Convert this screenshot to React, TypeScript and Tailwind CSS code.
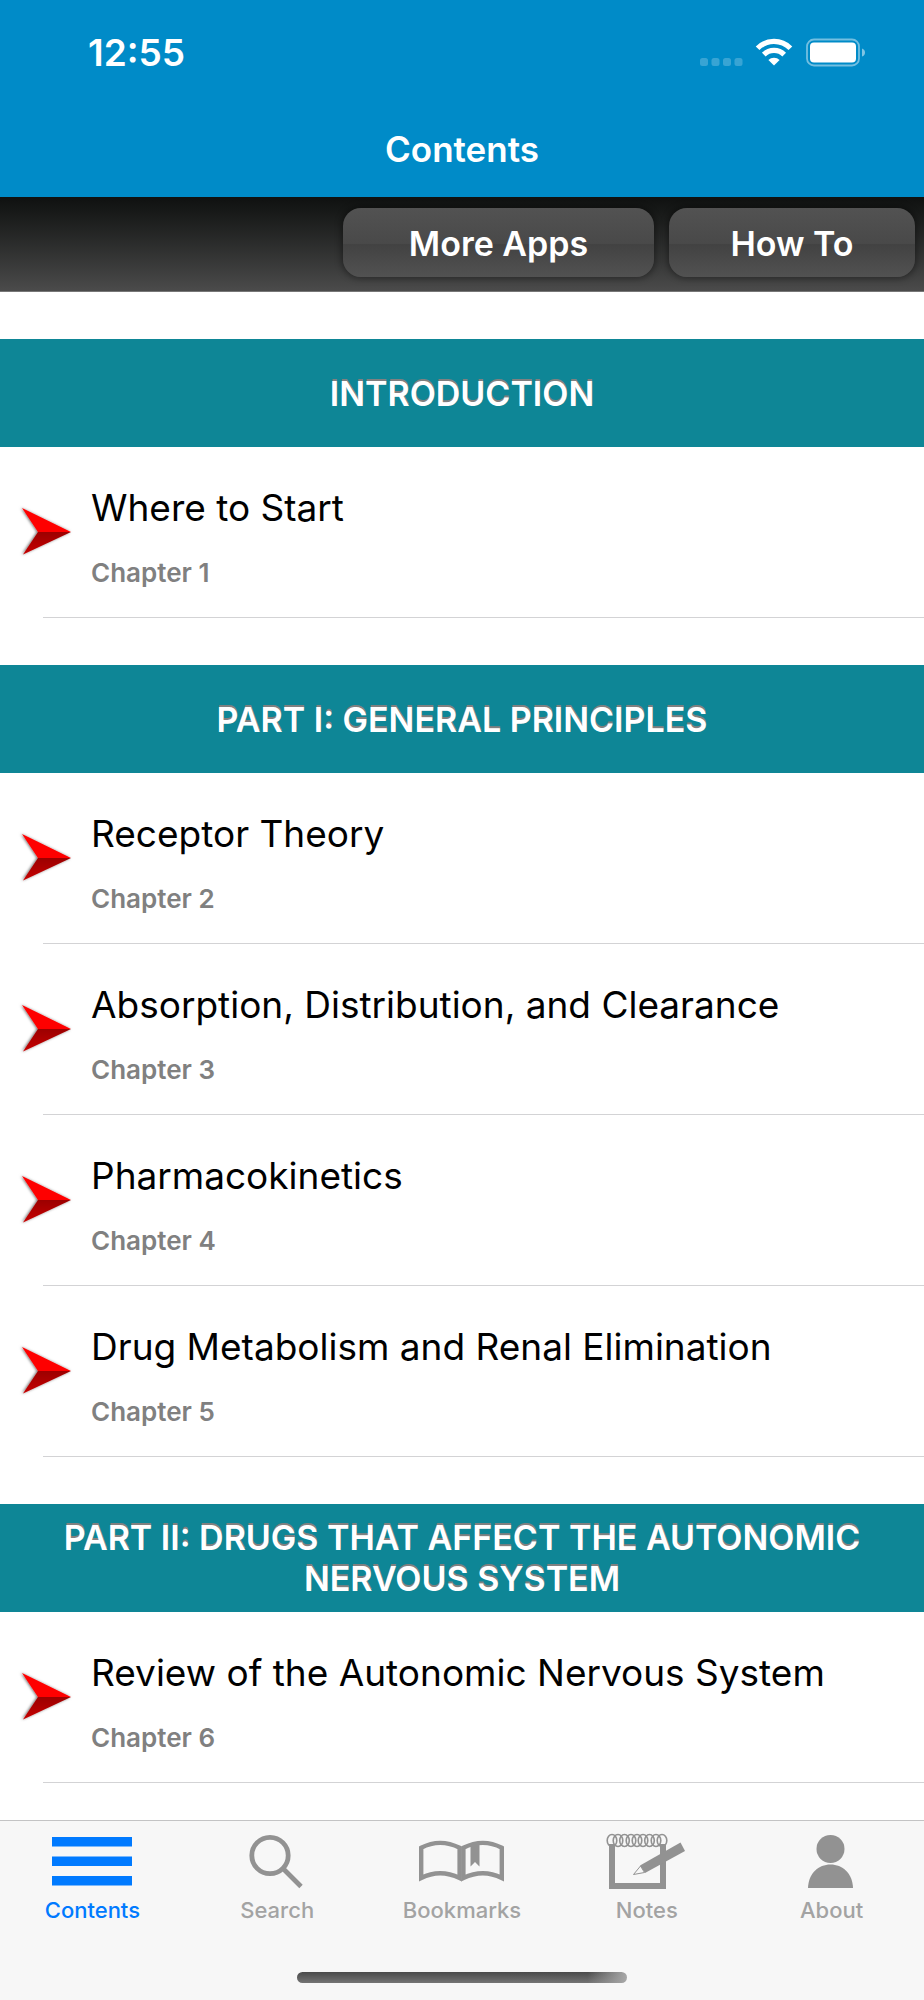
import type { ReactNode } from "react";

const sections = [
  {
    title: "Introduction",
    chapters: [{ number: 1, title: "Where to Start" }],
  },
  {
    title: "Part I: General Principles",
    chapters: [
      { number: 2, title: "Receptor Theory" },
      { number: 3, title: "Absorption, Distribution, and Clearance" },
      { number: 4, title: "Pharmacokinetics" },
      { number: 5, title: "Drug Metabolism and Renal Elimination" },
    ],
  },
  {
    title: "Part II: Drugs That Affect the Autonomic Nervous System",
    chapters: [{ number: 6, title: "Review of the Autonomic Nervous System" }],
  },
];

function StatusIcons() {
  return (
    <svg width="168" height="30" viewBox="0 0 168 30" fill="#fff" aria-hidden="true">
      {/* No signal */}
      <g opacity="0.22">
        <rect x="2" y="20" width="8" height="8" rx="2.5" />
        <rect x="13.5" y="20" width="8" height="8" rx="2.5" />
        <rect x="25" y="20" width="8" height="8" rx="2.5" />
        <rect x="36.5" y="20" width="8" height="8" rx="2.5" />
      </g>
      {/* Wifi */}
      <g fill="none" stroke="#fff" strokeWidth="5.2">
        <path d="M59.6 10.3a23 23 0 0 1 32.8 0" />
        <path d="M65.8 16.6a14.5 14.5 0 0 1 20.4 0" />
      </g>
      <path d="M76 27.6l-5.6-5.6a8 8 0 0 1 11.2 0z" />
      {/* Battery */}
      <rect x="109" y="1.5" width="52" height="26" rx="7" fill="none" stroke="#fff" strokeWidth="1.8" opacity="0.45" />
      <rect x="112" y="4.5" width="46" height="20" rx="4" />
      <path d="M164 10.5q3 1 3 4t-3 4z" opacity="0.5" />
    </svg>
  );
}

function Arrow() {
  return (
    <svg width="56" height="56" viewBox="0 0 56 56" className="shrink-0" aria-hidden="true">
      <defs>
        <linearGradient id="arrow-dark" x1="0" y1="0" x2="0" y2="1">
          <stop offset="0" stopColor="#9c0000" />
          <stop offset="1" stopColor="#c60000" />
        </linearGradient>
        <filter id="arrow-shadow" x="-20%" y="-20%" width="140%" height="140%">
          <feDropShadow dx="-1" dy="0" stdDeviation="1.5" floodColor="#000" floodOpacity="0.6" />
        </filter>
      </defs>
      <g filter="url(#arrow-shadow)">
        <path d="M4 3L53 27H20z" fill="#fe0000" />
        <path d="M20 27H53L5 49.5z" fill="url(#arrow-dark)" />
      </g>
    </svg>
  );
}

function TabIcon({ children }: { children: ReactNode }) {
  return (
    <svg width="92" height="60" viewBox="0 0 92 60" fill="#929292" aria-hidden="true">
      {children}
    </svg>
  );
}

const tabs = [
  {
    label: "Contents",
    active: true,
    icon: (
      <g fill="#007aff">
        <rect x="6" y="5" width="80" height="9.5" />
        <rect x="6" y="24.5" width="80" height="9.5" />
        <rect x="6" y="44" width="80" height="9.5" />
      </g>
    ),
  },
  {
    label: "Search",
    icon: (
      <g fill="none" stroke="#929292" strokeWidth="4.8">
        <circle cx="39" cy="23.5" r="18.2" />
        <path d="M52.5 37L70 54.5" />
      </g>
    ),
  },
  {
    label: "Bookmarks",
    icon: (
      <>
        <g fill="none" stroke="#929292" strokeWidth="4.4">
          <path d="M5.2 15.8Q24 6 43.6 15.8V46Q24 36.5 5.2 46Z" />
          <path d="M47.4 15.8Q67 6 85.8 15.8V46Q67 36.5 47.4 46Z" />
        </g>
        <path d="M54.5 12h9v22.5l-4.5-4.5-4.5 4.5z" />
      </>
    ),
  },
  {
    label: "Notes",
    icon: (
      <>
        <path d="M8 12H14V51H59V12H65V57H8Z" />
        <g fill="none" stroke="#929292" strokeWidth="1.6">
          {[11, 17, 23.5, 30, 36, 42, 48.5, 55, 61].map((cx) => (
            <ellipse key={cx} cx={cx} cy="8.5" rx="4.8" ry="6" />
          ))}
        </g>
        <path d="M39 33.5L79.5 10.5L84 19L44 41Z" />
        <path d="M39.5 34L32.5 42.5L43.5 40.5Z" fill="#f7f7f7" stroke="#929292" />
      </>
    ),
  },
  {
    label: "About",
    icon: (
      <>
        <circle cx="44.5" cy="17" r="14" />
        <path d="M22 56C22.5 41 32.5 32.5 44.5 32.5S66.5 41 67 56Z" />
      </>
    ),
  },
];

const toolbarButton =
  "h-[69px] pt-1 rounded-[18px] text-[34px] leading-10 font-semibold bg-linear-[to_bottom,#525252,#494949_52%,#424242_53%,#525252] shadow-[0_0_6px_2px_rgba(0,0,0,0.35)]";

export default function App() {
  return (
    <div className="flex min-h-screen flex-col bg-white font-['Inter',sans-serif] text-black">
      <header className="text-white">
        <div className="bg-[#008bc8]">
          <div className="flex h-[106px] items-center justify-between pr-[58px] pl-[88px]">
            <span className="text-[37px] leading-10 font-semibold">12:55</span>
            <StatusIcons />
          </div>
          <h1 className="flex h-[91px] items-center justify-center pb-1.5 text-[35px] leading-10 font-semibold">
            Contents
          </h1>
        </div>
        <div className="flex h-[95px] items-center justify-end gap-[15px] border-b border-[#777] bg-linear-to-b from-[#0f1110] to-[#4b4b4b] pr-[9px] pb-1">
          <button type="button" className={`w-[311px] ${toolbarButton}`}>
            More Apps
          </button>
          <button type="button" className={`w-[246px] ${toolbarButton}`}>
            How To
          </button>
        </div>
      </header>

      <main className="flex-1">
        {sections.map((section) => (
          <section key={section.title} className="pt-[47px]">
            <h2 className="flex h-[108px] items-center justify-center bg-[#0e8696] px-12 text-center text-[34px] leading-[41px] font-semibold text-white uppercase [text-shadow:0_-2px_0_#808080]">
              {section.title}
            </h2>
            <ul>
              {section.chapters.map((chapter) => (
                <li key={chapter.number}>
                  <a href={`#chapter-${chapter.number}`} className="flex items-center">
                    <span className="w-[43px] pl-[18px]">
                      <Arrow />
                    </span>
                    <span className="flex h-[171px] flex-1 flex-col justify-center gap-[26px] border-b border-[#d3d3d5] pt-2.5 pl-12">
                      <span className="text-[37px] leading-[46px]">{chapter.title}</span>
                      <span className="text-[26px] leading-8 font-semibold text-[#808080]">
                        Chapter {chapter.number}
                      </span>
                    </span>
                  </a>
                </li>
              ))}
            </ul>
          </section>
        ))}
      </main>

      <nav className="sticky bottom-0 border-t border-[#c3c3c4] bg-[#f7f7f7]">
        <ul className="grid grid-cols-5 pt-[11px]">
          {tabs.map((tab) => (
            <li key={tab.label}>
              <a
                href={`#${tab.label.toLowerCase()}`}
                aria-current={tab.active ? "page" : undefined}
                className={`flex flex-col items-center gap-1 text-[22px] leading-7 font-medium ${
                  tab.active ? "text-[#007aff]" : "text-[#a3a3a3]"
                }`}
              >
                <TabIcon>{tab.icon}</TabIcon>
                {tab.label}
              </a>
            </li>
          ))}
        </ul>
        {/* Home indicator */}
        <div className="mx-auto mt-12 mb-[17px] h-[11px] w-[330px] rounded-full bg-[linear-gradient(to_right,transparent_88%,#a8a8a8),linear-gradient(#4a4a4a,#747474)]" />
      </nav>
    </div>
  );
}
